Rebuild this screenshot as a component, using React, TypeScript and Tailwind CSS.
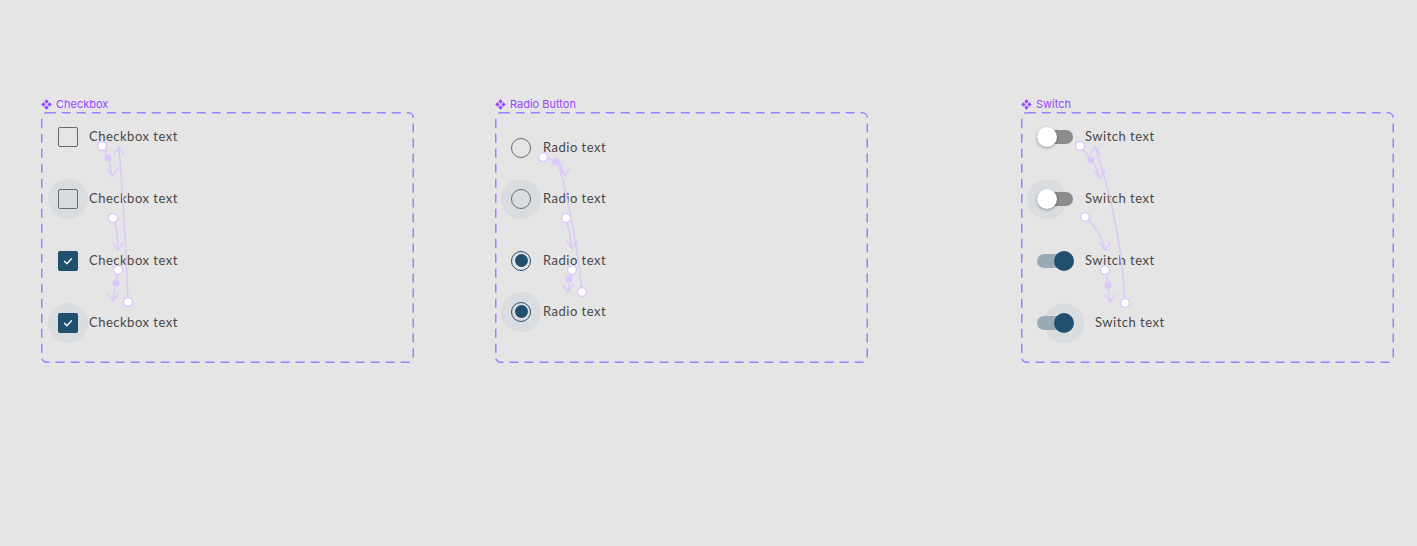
import type { ReactNode } from "react";

const ink = "#dcc9fb";

type Flow = {
  d: string;
  start: [number, number];
  tip: [number, number];
  dir: "up" | "down";
  dot?: [number, number];
};

function FlowLines({ flows }: { flows: Flow[] }) {
  return (
    <svg className="absolute inset-0 pointer-events-none" width={373} height={251}>
      {flows.map((f, i) => {
        const [tx, ty] = f.tip;
        const s = f.dir === "down" ? -7 : 7;
        return (
          <g key={i} fill="none" stroke={ink} strokeWidth={1.5} strokeLinecap="round" strokeLinejoin="round">
            <path d={f.d} />
            <polyline points={`${tx - 5},${ty + s} ${tx},${ty} ${tx + 5},${ty + s}`} />
            {f.dot && <circle cx={f.dot[0]} cy={f.dot[1]} r={3.5} fill={ink} stroke="none" />}
            <circle cx={f.start[0]} cy={f.start[1]} r={4.5} fill="#ffffff" />
          </g>
        );
      })}
    </svg>
  );
}

function Frame({ label, children, flows }: { label: string; children: ReactNode; flows: Flow[] }) {
  return (
    <div className="flex flex-col">
      <div className="h-[12px] text-[11px] leading-[12px] text-[#9747ff] font-['Inter',sans-serif] flex items-center gap-[4px]">
        <svg width="11" height="11" viewBox="0 0 12 12" fill="#9747ff">
          <path d="M6 0.3l2.4 2.4-2.4 2.4-2.4-2.4z M6 6.9l2.4 2.4-2.4 2.4-2.4-2.4z M2.7 3.6l2.4 2.4-2.4 2.4-2.4-2.4z M9.3 3.6l2.4 2.4-2.4 2.4-2.4-2.4z" />
        </svg>
        <span>{label}</span>
      </div>
      <div className="relative mt-[2px] w-[373px] h-[251px]">
        <svg className="absolute inset-0 pointer-events-none" width={373} height={251}>
          <rect x={0.75} y={0.75} width={371.5} height={249.5} rx={5} fill="none" stroke="#9d80fa" strokeWidth={1.5} strokeDasharray="9 6" />
        </svg>
        {children}
        <FlowLines flows={flows} />
      </div>
    </div>
  );
}

const textCls = "text-[13px] tracking-[0.5px] text-[#484848] font-['Lato',sans-serif]";

function Halo({ on, children }: { on?: boolean; children: ReactNode }) {
  return (
    <div className={`w-[40px] h-[40px] rounded-full flex items-center justify-center ${on ? "bg-[#dadde0]" : ""}`}>
      {children}
    </div>
  );
}

function CheckRow({ checked, hover }: { checked?: boolean; hover?: boolean }) {
  return (
    <div className="h-[40px] flex items-center pl-[7px]">
      <Halo on={hover}>
        {checked ? (
          <div className="w-[20px] h-[20px] rounded-[2px] bg-[#21506f] flex items-center justify-center">
            <svg width="12" height="12" viewBox="0 0 12 12" fill="none" stroke="#fff" strokeWidth="1.3" strokeLinecap="round" strokeLinejoin="round">
              <path d="M2.5 6.3l2.4 2.4 4.6-5" />
            </svg>
          </div>
        ) : (
          <div className="w-[20px] h-[20px] rounded-[2px] border-[1.5px] border-[#6a6a6a]" />
        )}
      </Halo>
      <span className={`ml-[1px] ${textCls}`}>Checkbox text</span>
    </div>
  );
}

function RadioRow({ checked, hover }: { checked?: boolean; hover?: boolean }) {
  return (
    <div className="h-[40px] flex items-center pl-[6px]">
      <Halo on={hover}>
        {checked ? (
          <div className="w-[20px] h-[20px] rounded-full border-[1.5px] border-[#21506f] flex items-center justify-center">
            <div className="w-[13px] h-[13px] rounded-full bg-[#21506f]" />
          </div>
        ) : (
          <div className="w-[20px] h-[20px] rounded-full border-[1.5px] border-[#6a6a6a]" />
        )}
      </Halo>
      <span className={`ml-[2px] ${textCls}`}>Radio text</span>
    </div>
  );
}

function SwitchRow({ checked, hover }: { checked?: boolean; hover?: boolean }) {
  return (
    <div className="h-[40px] flex items-center pl-[16px]">
      <div className="relative w-[36px] h-[14px]">
        {hover && (
          <div className={`absolute top-[-13px] w-[40px] h-[40px] rounded-full bg-[#dadde0] ${checked ? "left-[7px]" : "left-[-10px]"}`} />
        )}
        <div className={`absolute inset-0 rounded-full ${checked ? "bg-[#9aabb8]" : "bg-[#8c8c8c]"}`} />
        {checked ? (
          <div className="absolute top-[-3px] left-[17px] w-[20px] h-[20px] rounded-full bg-[#21506f]" />
        ) : (
          <div className="absolute top-[-3px] left-0 w-[20px] h-[20px] rounded-full bg-white shadow-[0_1px_3px_rgba(0,0,0,0.35)]" />
        )}
      </div>
      <span className={`${hover && checked ? "ml-[22px]" : "ml-[12px]"} ${textCls}`}>Switch text</span>
    </div>
  );
}

const checkFlows: Flow[] = [
  { d: "M61 34 Q67 44 68 50 Q70 57 71 64", start: [61, 34], tip: [71, 64], dir: "down", dot: [67, 46] },
  { d: "M87 190 Q84 110 78 35", start: [87, 190], tip: [78, 35], dir: "up" },
  { d: "M72 106 Q77 118 77 138", start: [72, 106], tip: [77, 138], dir: "down" },
  { d: "M77 158 Q75 170 72 189", start: [77, 158], tip: [72, 189], dir: "down", dot: [75, 171] },
];

const radioFlows: Flow[] = [
  { d: "M48 45 Q58 47 62 51 Q68 57 70 64", start: [48, 45], tip: [70, 64], dir: "down", dot: [61, 50] },
  { d: "M87 180 Q80 110 62 47", start: [87, 180], tip: [62, 47], dir: "up" },
  { d: "M71 106 Q75 120 77 136", start: [71, 106], tip: [77, 136], dir: "down" },
  { d: "M77 158 Q74 168 73 180", start: [77, 158], tip: [73, 180], dir: "down", dot: [74, 167] },
];

const switchFlows: Flow[] = [
  { d: "M59 34 Q66 42 70 48 Q76 56 79 66", start: [59, 34], tip: [79, 66], dir: "down", dot: [70, 48] },
  { d: "M104 191 Q100 110 74 35", start: [104, 191], tip: [74, 35], dir: "up" },
  { d: "M64 105 Q80 118 84 138", start: [64, 105], tip: [84, 138], dir: "down" },
  { d: "M84 158 Q87 172 89 190", start: [84, 158], tip: [89, 190], dir: "down", dot: [87, 173] },
];

export default function App() {
  return (
    <div className="w-full h-[546px] bg-[#e5e5e5] flex items-start pt-[98px] pl-[41px] overflow-hidden">
      <Frame label="Checkbox" flows={checkFlows}>
        <div className="flex flex-col gap-[22px] pt-[4.5px]">
          <CheckRow />
          <CheckRow hover />
          <CheckRow checked />
          <CheckRow checked hover />
        </div>
      </Frame>
      <div className="ml-[81px]">
        <Frame label="Radio Button" flows={radioFlows}>
          <div className="flex flex-col gap-[22px] pt-[15.5px]">
            <div className="flex flex-col gap-[11px]">
              <RadioRow />
              <RadioRow hover />
            </div>
            <div className="flex flex-col gap-[11px]">
              <RadioRow checked />
              <RadioRow checked hover />
            </div>
          </div>
        </Frame>
      </div>
      <div className="ml-[153px]">
        <Frame label="Switch" flows={switchFlows}>
          <div className="flex flex-col gap-[22px] pt-[4.5px]">
            <SwitchRow />
            <SwitchRow hover />
            <SwitchRow checked />
            <SwitchRow checked hover />
          </div>
        </Frame>
      </div>
    </div>
  );
}
